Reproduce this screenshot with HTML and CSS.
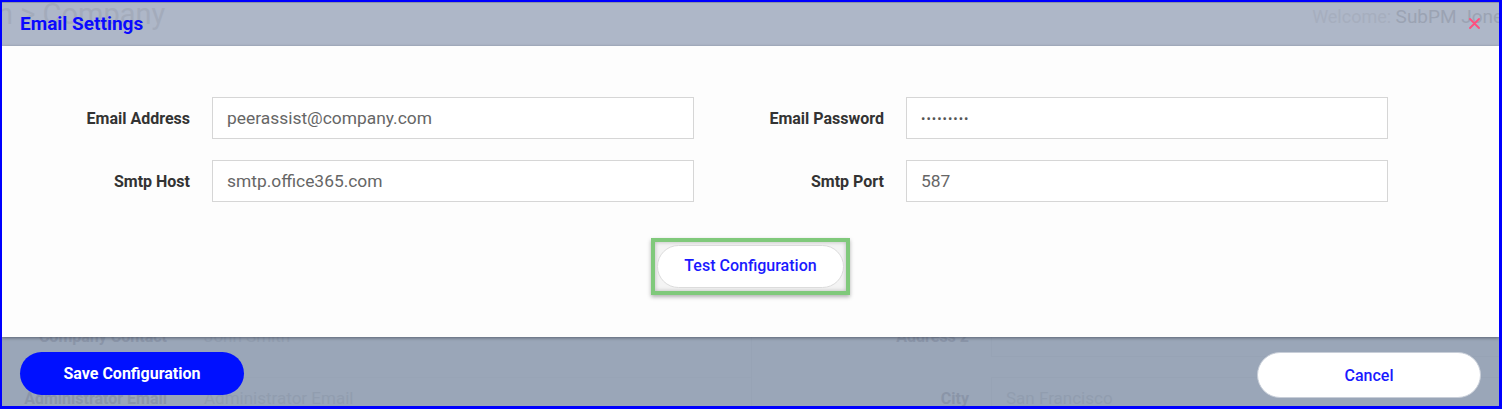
FILE: index.html
```html
<!DOCTYPE html>
<html lang="en">
<head>
<meta charset="utf-8">
<title>Email Settings</title>
<link rel="stylesheet" href="styles.css">
</head>
<body>
<div class="frame">
  <div class="page">
    <div class="topbar">
      <span class="crumb">n &gt; Company</span>
      <span class="welcome">Welcome: <b>SubPM Jones</b></span>
    </div>
    <div class="ghost-form">
      <div class="ghost-col left">
        <span class="g-label">Company Contact</span><span class="g-value">John Smith</span>
        <span class="g-label">Administrator Email</span><span class="g-value">Administrator Email</span>
      </div>
      <div class="ghost-col right">
        <span class="g-label">Address 2</span><span class="g-value"></span>
        <span class="g-label">City</span><span class="g-value">San Francisco</span>
      </div>
    </div>
  </div>

  <div class="overlay">
    <div class="modal-header">
      <h1 class="modal-title">Email Settings</h1>
      <button class="close" aria-label="Close">
        <svg width="11" height="11" viewBox="0 0 11 11"><path d="M1 1 L10 10 M10 1 L1 10" stroke="#ff4f7e" stroke-width="1.8" stroke-linecap="round" fill="none"/></svg>
      </button>
    </div>
    <div class="modal-body">
      <div class="fields">
        <div class="col">
          <div class="field"><label class="label">Email Address</label><input class="input" type="text" value="peerassist@company.com"></div>
          <div class="field"><label class="label">Smtp Host</label><input class="input" type="text" value="smtp.office365.com"></div>
        </div>
        <div class="col">
          <div class="field"><label class="label">Email Password</label><input class="input pw" type="text" value="•••••••••"></div>
          <div class="field"><label class="label">Smtp Port</label><input class="input" type="text" value="587"></div>
        </div>
      </div>
      <div class="test-wrap">
        <div class="highlight"><button class="test-btn">Test Configuration</button></div>
      </div>
    </div>
    <div class="modal-footer">
      <button class="save-btn">Save Configuration</button>
      <button class="cancel-btn">Cancel</button>
    </div>
  </div>
</div>
</body>
</html>
```
FILE: styles.css
```css
* { box-sizing: border-box; }
html, body { margin: 0; padding: 0; }
body { font-family: Roboto, "Liberation Sans", Arial, sans-serif; background: #9aa6b8; }

.frame {
  position: relative;
  width: 1502px;
  height: 409px;
  border: 2px solid #0000ff;
  border-right-width: 3px;
  border-bottom-width: 3px;
  background: #9aa6b8;
  overflow: hidden;
}

/* dimmed page behind the dialog */
.page { display: flex; flex-direction: column; }
.topbar {
  height: 44px;
  background: #aeb7c8;
  border-top: 1px solid #8e96a6;
  display: flex;
  justify-content: space-between;
  align-items: flex-start;
  overflow: hidden;
  white-space: nowrap;
}
.crumb {
  font-size: 29px;
  line-height: 28px;
  color: #a3abbb;
  margin-top: -3px;
  margin-left: -5px;
}
.welcome {
  font-size: 18px;
  line-height: 22px;
  color: #a6aebe;
  margin-top: 3px;
  margin-right: -14px;
}
.welcome b { font-weight: 400; color: #9ba3b3; font-size: 19px; }

.ghost-form {
  padding-top: 269px;
  display: grid;
  grid-template-columns: 749px 1fr;
}
.ghost-col {
  display: grid;
  grid-auto-rows: 42px;
  row-gap: 20px;
  align-items: center;
}
.ghost-col.left { grid-template-columns: 165px 1fr; column-gap: 14px; }
.ghost-col.right { grid-template-columns: 217px 1fr; column-gap: 22px; border-left: 1px solid #97a3b5; }
.g-label { text-align: right; font-weight: 700; font-size: 16px; color: #8a95a8; }
.g-value {
  height: 42px;
  display: flex;
  align-items: center;
  padding-left: 14px;
  font-size: 17px;
  color: #919daf;
  border: 1px solid #97a3b5;
  border-right: 0;
}
.ghost-col.left .g-value { border-color: transparent; padding-left: 22px; border-top-color: #98a4b6; }

/* dialog */
.overlay {
  position: absolute;
  inset: 0;
  display: flex;
  flex-direction: column;
}
.modal-header {
  height: 44px;
  display: flex;
  align-items: center;
  justify-content: space-between;
  padding: 0 19px 0 18px;
}
.modal-title {
  margin: 0;
  font-size: 19px;
  font-weight: 700;
  color: #0a0aff;
  margin-top: -2px;
}
.close {
  background: none;
  border: 0;
  padding: 0;
  width: 11px;
  height: 11px;
  display: block;
  margin-top: -2px;
}
.close svg { display: block; }

.modal-body {
  height: 291px;
  background: #fdfdfd;
  box-shadow: 0 1px 3px rgba(40, 45, 60, 0.55);
  padding-top: 51px;
  position: relative;
}
.fields {
  display: grid;
  grid-template-columns: 694px 694px;
}
.col { display: flex; flex-direction: column; gap: 21px; }
.field { display: flex; align-items: center; gap: 22px; }
.label {
  width: 188px;
  text-align: right;
  font-size: 16px;
  font-weight: 700;
  color: #333;
}
.input {
  width: 482px;
  height: 42px;
  border: 1px solid #d6d6d6;
  background: #fff;
  padding: 0 14px;
  font-family: Roboto, "Liberation Sans", Arial, sans-serif;
  font-size: 17.4px;
  color: #666;
  outline: none;
}
.input.pw { font-size: 13px; letter-spacing: 1px; color: #555; }

.test-wrap {
  display: flex;
  justify-content: center;
  margin-top: 36px;
}
.highlight {
  border: 4px solid #80c97b;
  padding: 3px 2px;
  box-shadow: 0 2px 4px rgba(0, 0, 0, 0.3), inset 0 0 4px rgba(0, 0, 0, 0.25);
  background: #f4f4f4;
}
.test-btn {
  display: block;
  width: 187px;
  height: 43px;
  border-radius: 22px;
  border: 1px solid #dcdcdc;
  background: #fff;
  font-family: Roboto, "Liberation Sans", Arial, sans-serif;
  font-size: 16px;
  font-weight: 500;
  color: #1a1aff;
  padding: 0 0 2px 0;
}

.modal-footer {
  flex: 1;
  display: flex;
  justify-content: space-between;
  align-items: flex-start;
  padding: 15px 18px 0 18px;
}
.save-btn {
  width: 224px;
  height: 43px;
  border-radius: 22px;
  border: 0;
  background: #0010ff;
  color: #fff;
  font-family: Roboto, "Liberation Sans", Arial, sans-serif;
  font-size: 16px;
  font-weight: 700;
}
.cancel-btn {
  width: 224px;
  height: 46px;
  border-radius: 23px;
  border: 1px solid #c8ced8;
  background: #fff;
  color: #1a1aff;
  font-family: Roboto, "Liberation Sans", Arial, sans-serif;
  font-size: 16px;
  font-weight: 500;
}
```
